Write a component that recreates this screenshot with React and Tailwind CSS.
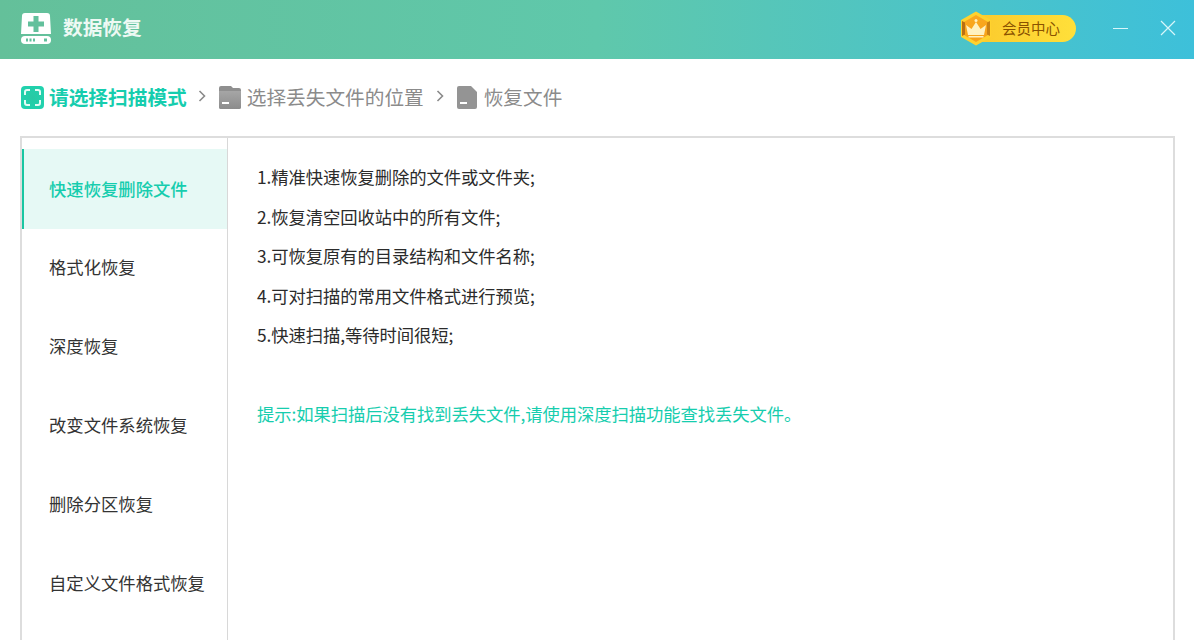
import React from "react";

function Logo() {
  return (
    <svg width="30" height="31" viewBox="0 0 30 31" className="shrink-0">
      <path d="M4 0H26a3 3 0 0 1 3 3L30 21H0L1 3a3 3 0 0 1 3-3Z" fill="#fff" />
      <path d="M12.500 3h5v5.500H23v5h-5.500V19h-5v-5.500H7v-5h5.500Z" fill="#62c09c" />
      <rect x="0" y="23" width="30" height="8" rx="4" fill="#fff" />
      <rect x="5" y="25.500" width="2" height="3" fill="#62c09c" />
      <rect x="8.500" y="25.500" width="2" height="3" fill="#62c09c" />
      <rect x="12" y="25.500" width="2" height="3" fill="#62c09c" />
      <rect x="23" y="25.500" width="3" height="3" fill="#62c09c" />
    </svg>
  );
}

function Crown() {
  return (
    <svg width="34" height="35" viewBox="0 0 34 35" className="shrink-0">
      <defs>
        <linearGradient id="hex" x1="0" y1="0" x2="0" y2="1">
          <stop offset="0" stopColor="#f9a81f" />
          <stop offset="1" stopColor="#f7a21a" />
        </linearGradient>
      </defs>
      <path d="M17 1.500 31 9.500V25.500L17 33.500 3 25.500V9.500Z" fill="#ffd22e" stroke="#ffd22e" strokeWidth="2" strokeLinejoin="round" />
      <path d="M17 4 29 11V24L17 31 5 24V11Z" fill="url(#hex)" />
      <path d="M3 10 6 11.500V23.500L3 25Z" fill="#b96f12" />
      <path d="M31 10 28 11.500V23.500L31 25Z" fill="#c98114" />
      <circle cx="17" cy="9.500" r="1.500" fill="#fff1c0" />
      <path d="M7 14 12.500 18 17 11 21.500 18 27 14 25 24H9Z" fill="#fff1c0" />
      <path d="M9.500 25H24.500V26.500H9.500Z" fill="#fff1c0" />
    </svg>
  );
}

function ScanIcon() {
  return (
    <svg width="23" height="23" viewBox="0 0 23 23" className="shrink-0">
      <defs>
        <radialGradient id="scan" cx="0.500" cy="0.500" r="0.700">
          <stop offset="0" stopColor="#28c9a4" />
          <stop offset="1" stopColor="#1fd4b0" />
        </radialGradient>
      </defs>
      <rect width="23" height="23" rx="4" fill="url(#scan)" />
      <path d="M4 9V6a2 2 0 0 1 2-2h3M14 4h3a2 2 0 0 1 2 2v3M19 14v3a2 2 0 0 1-2 2h-3M9 19H6a2 2 0 0 1-2-2v-3" fill="none" stroke="#e4fbf5" strokeWidth="2" />
    </svg>
  );
}

function FolderIcon() {
  return (
    <svg width="22" height="23" viewBox="0 0 22 23" className="shrink-0">
      <defs>
        <linearGradient id="fold" x1="0" y1="0" x2="0" y2="1">
          <stop offset="0" stopColor="#a6a6a6" />
          <stop offset="1" stopColor="#8c8c8c" />
        </linearGradient>
      </defs>
      <path d="M2 0H12L14 2H20a2 2 0 0 1 2 2V21a2 2 0 0 1-2 2H2a2 2 0 0 1-2-2V2a2 2 0 0 1 2-2Z" fill="#8f8f8f" />
      <path d="M0 5H22V21a2 2 0 0 1-2 2H2a2 2 0 0 1-2-2Z" fill="url(#fold)" />
      <rect x="3" y="16" width="7" height="2" fill="#fff" />
    </svg>
  );
}

function FileIcon() {
  return (
    <svg width="20" height="23" viewBox="0 0 20 23" className="shrink-0">
      <path d="M2 0H14L20 6V21a2 2 0 0 1-2 2H2a2 2 0 0 1-2-2V2a2 2 0 0 1 2-2Z" fill="#949494" />
      <rect x="3" y="16" width="7" height="2" fill="#fff" />
    </svg>
  );
}

function Chevron({ className }) {
  return (
    <svg width="8" height="12" viewBox="0 0 8 12" className={className}>
      <path d="M1.500 1 6.500 6 1.500 11" fill="none" stroke="#8a8a8a" strokeWidth="1.600" />
    </svg>
  );
}

const tabs = ["快速恢复删除文件", "格式化恢复", "深度恢复", "改变文件系统恢复", "删除分区恢复", "自定义文件格式恢复"];
const lines = [
  "1.精准快速恢复删除的文件或文件夹;",
  "2.恢复清空回收站中的所有文件;",
  "3.可恢复原有的目录结构和文件名称;",
  "4.可对扫描的常用文件格式进行预览;",
  "5.快速扫描,等待时间很短;",
];

export default function App() {
  return (
    <div className="w-[1194px] h-[640px] overflow-hidden bg-white flex flex-col font-['Noto_Sans_CJK_SC','Noto_Sans',sans-serif]">
      <header className="h-[59px] shrink-0 flex items-center bg-gradient-to-r from-[#64c09a] via-[#5fc8ab] to-[#3dc0da] pl-[21px] pb-[3px]">
        <Logo />
        <span className="ml-3 text-[19.700px] font-bold text-[#eef9f4] leading-none pb-[2px]">数据恢复</span>
        <div className="ml-auto relative flex items-center h-[27px] w-[104px] mr-[37px] rounded-r-full bg-gradient-to-r from-[#fbc92c] to-[#ffe03a] pl-[30px]">
          <div className="absolute left-[-13px] top-[-4px]"><Crown /></div>
          <span className="text-[14.500px] text-[#8a5200] leading-none">会员中心</span>
        </div>
        <div className="w-[15px] h-px bg-[#d8f6fa] mr-[32px]" />
        <svg width="16" height="16" viewBox="0 0 16 16" className="mr-[18px]">
          <path d="M1 1 15 15M15 1 1 15" stroke="#d8f6fa" strokeWidth="1.200" fill="none" />
        </svg>
      </header>

      <nav className="h-[77px] shrink-0 flex items-center pl-[21px]">
        <ScanIcon />
        <span className="ml-[5px] text-[19.700px] font-bold text-[#16cdae] leading-none pb-[1px]">请选择扫描模式</span>
        <Chevron className="ml-[11px] -mt-1" />
        <div className="ml-[13px]"><FolderIcon /></div>
        <span className="ml-[6px] text-[19.670px] text-[#8b8b8b] leading-none pb-[1px]">选择丢失文件的位置</span>
        <Chevron className="ml-[12px] -mt-1" />
        <div className="ml-[13px]"><FileIcon /></div>
        <span className="ml-[7px] text-[19.670px] text-[#8b8b8b] leading-none pb-[1px]">恢复文件</span>
      </nav>

      <main className="ml-[20px] mr-[19px] flex-1 min-h-0 flex border-2 border-b-0 border-[#dddddd]">
        <aside className="w-[206px] shrink-0 border-r border-[#d8d8d8] pt-[11px]">
          {tabs.map((t, i) => (
            <div
              key={t}
              className={
                i === 0
                  ? "h-[80px] flex items-center pl-[25px] bg-[#e6f9f5] border-l-2 border-[#1ac6a2] text-[17.330px] font-medium text-[#16cdae]"
                  : "h-[79px] flex items-center pl-[27px] text-[17.330px] text-[#333333]"
              }
            >
              <span className={i === 0 ? "leading-none pb-[1px]" : "leading-none pb-[3px]"}>{t}</span>
            </div>
          ))}
        </aside>
        <section className="flex-1 pl-[29px] pt-[19.200px] text-[17.330px] leading-[39.500px] tracking-[-0.080px]">
          {lines.map((l) => (
            <p key={l} className="text-[#2b2b2b]">{l}</p>
          ))}
          <p className="mt-[39.500px] text-[#16cdae]">提示:如果扫描后没有找到丢失文件,请使用深度扫描功能查找丢失文件。</p>
        </section>
      </main>
    </div>
  );
}
